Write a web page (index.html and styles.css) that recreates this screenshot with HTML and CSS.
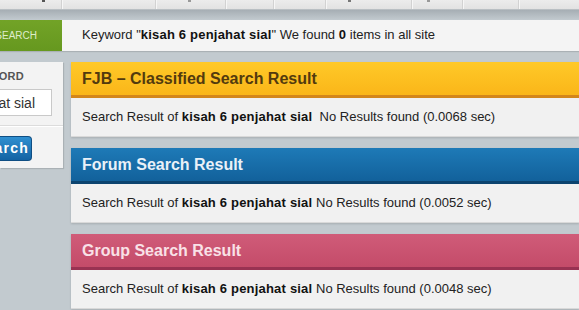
FILE: index.html
```html
<!DOCTYPE html>
<html>
<head>
<meta charset="utf-8">
<link rel="stylesheet" href="styles.css">
</head>
<body>
<div class="nav">
  <div class="nav-item w62"><span class="mark m44"></span></div>
  <div class="nav-item w94"></div>
  <div class="nav-item w70"><span class="mark m33"></span></div>
  <div class="nav-item w48"></div>
  <div class="nav-item w52"></div>
  <div class="nav-item w86"><span class="mark m22"></span></div>
  <div class="nav-item w51"><span class="mark m16"></span></div>
  <div class="nav-item w56"></div>
  <div class="nav-item last"></div>
</div>
<div class="shade"></div>
<div class="searchbar">
  <div class="tab"><span>SEARCH</span></div>
  <div class="keyword">Keyword "<b>kisah 6 penjahat sial</b>" We found <b>0</b> items in all site</div>
</div>
<div class="content">
  <div class="sidebar">
    <div class="label"><span>KEYWORD</span></div>
    <div class="input"><span>kisah 6 penjahat sial</span></div>
    <div class="sep"></div>
    <div class="btn"><span>Search</span></div>
  </div>
  <div class="main">
    <div class="panel">
      <div class="head fjb">FJB – Classified Search Result</div>
      <div class="body">Search Result of <b>kisah 6 penjahat sial</b>&nbsp; No Results found (0.0068 sec)</div>
    </div>
    <div class="panel">
      <div class="head forum">Forum Search Result</div>
      <div class="body">Search Result of <b>kisah 6 penjahat sial</b> No Results found (0.0052 sec)</div>
    </div>
    <div class="panel">
      <div class="head group">Group Search Result</div>
      <div class="body">Search Result of <b>kisah 6 penjahat sial</b> No Results found (0.0048 sec)</div>
    </div>
  </div>
</div>
</body>
</html>
```
FILE: styles.css
```css
html, body {
  margin: 0;
  padding: 0;
}
body {
  background: #c2cacf;
  font-family: "Liberation Sans", Arial, sans-serif;
  font-size: 13px;
  color: #222;
  overflow: hidden;
  width: 579px;
  height: 310px;
}
.nav {
  display: flex;
  height: 9px;
  background: linear-gradient(#ececec, #e2e2e2);
  border-bottom: 1px solid #b9bfc3;
}
.nav-item {
  flex: none;
  height: 9px;
  border-right: 1px solid #d2d2d2;
  box-shadow: 1px 0 0 #f6f6f6;
  display: flex;
  align-items: flex-start;
}
.nav-item.last { flex: 1; border-right: 0; box-shadow: none; }
.w62 { width: 61px; }
.w94 { width: 93px; }
.w70 { width: 69px; }
.w48 { width: 47px; }
.w52 { width: 51px; }
.w86 { width: 85px; }
.w51 { width: 50px; }
.w56 { width: 55px; }
.mark {
  width: 3px;
  height: 2px;
  background: #555;
}
.m44 { margin-left: 42px; }
.m33 { margin-left: 32px; background: #999; }
.m22 { margin-left: 22px; background: #777; }
.m16 { margin-left: 15px; background: #999; }
.shade {
  height: 10px;
  background: linear-gradient(#a6aeb4, #c2cacf);
}
.searchbar {
  display: flex;
  height: 31px;
  box-shadow: 0 1px 1px rgba(0,0,0,0.12);
}
.tab {
  width: 62px;
  flex: none;
  background: linear-gradient(#72a327, #66981f);
  color: #dfeccb;
  font-size: 10px;
  line-height: 31px;
  display: flex;
  justify-content: flex-end;
  padding-right: 25px;
  box-sizing: border-box;
  white-space: nowrap;
  overflow: hidden;
}
.tab span, .label span, .input span, .btn span { flex: none; }
.keyword {
  flex: 1;
  background: #f4f4f4;
  line-height: 30px;
  padding-left: 20px;
  color: #222;
  white-space: nowrap;
}
.keyword b { color: #111; letter-spacing: 0.2px; }
.content {
  display: flex;
  gap: 8px;
  margin-top: 11px;
  align-items: flex-start;
}
.sidebar {
  width: 63px;
  flex: none;
  height: 106px;
  background: #f3f3f3;
  box-shadow: 1px 1px 1px rgba(0,0,0,0.12);
  box-sizing: border-box;
  padding-top: 8px;
  overflow: hidden;
}
.label {
  font-size: 11px;
  font-weight: bold;
  line-height: 13px;
  color: #555;
  display: flex;
  justify-content: flex-end;
  width: 24px;
  white-space: nowrap;
  letter-spacing: 0.3px;
}
.input {
  margin-top: 6px;
  width: 52px;
  height: 27px;
  box-sizing: border-box;
  background: #fff;
  border: 1px solid #c9c9c9;
  border-left: 0;
  display: flex;
  justify-content: flex-end;
  align-items: center;
  padding-right: 16px;
  overflow: hidden;
  white-space: nowrap;
  font-size: 14px;
  color: #333;
}
.sep {
  margin-top: 9px;
  height: 1px;
  background: #dcdcdc;
  border-bottom: 1px solid #fff;
}
.btn {
  margin-top: 9px;
  width: 32px;
  height: 25px;
  box-sizing: border-box;
  border: 1px solid #0f4e83;
  border-left: 0;
  border-radius: 0 4px 4px 0;
  background: linear-gradient(#2f8fd0, #1463a3);
  color: #fff;
  font-weight: bold;
  font-size: 14px;
  letter-spacing: 1.2px;
  line-height: 23px;
  display: flex;
  justify-content: flex-end;
  padding-right: 2px;
  white-space: nowrap;
  overflow: hidden;
}
.main {
  flex: 1;
  display: flex;
  flex-direction: column;
  gap: 11px;
}
.panel {
  box-shadow: 0 1px 2px rgba(0,0,0,0.15);
}
.head {
  height: 36px;
  box-sizing: border-box;
  padding-left: 11px;
  font-size: 16px;
  font-weight: bold;
  line-height: 33px;
  border-bottom: 3px solid;
  white-space: nowrap;
}
.fjb {
  background: linear-gradient(#ffc928, #fab619);
  border-bottom-color: #d3861b;
  color: #523a0e;
}
.forum {
  background: linear-gradient(#1e7ab7, #12619b);
  border-bottom-color: #0c446f;
  color: #eaf1f8;
}
.group {
  background: linear-gradient(#d05c79, #c44b69);
  border-bottom-color: #993252;
  color: #f9e1e7;
}
.body {
  height: 39px;
  box-sizing: border-box;
  background: #f1f1f1;
  border-bottom: 1px solid #d9d9d9;
  padding-left: 11px;
  line-height: 38px;
  white-space: nowrap;
  color: #222;
}
.body b { color: #111; letter-spacing: 0.2px; }
```
